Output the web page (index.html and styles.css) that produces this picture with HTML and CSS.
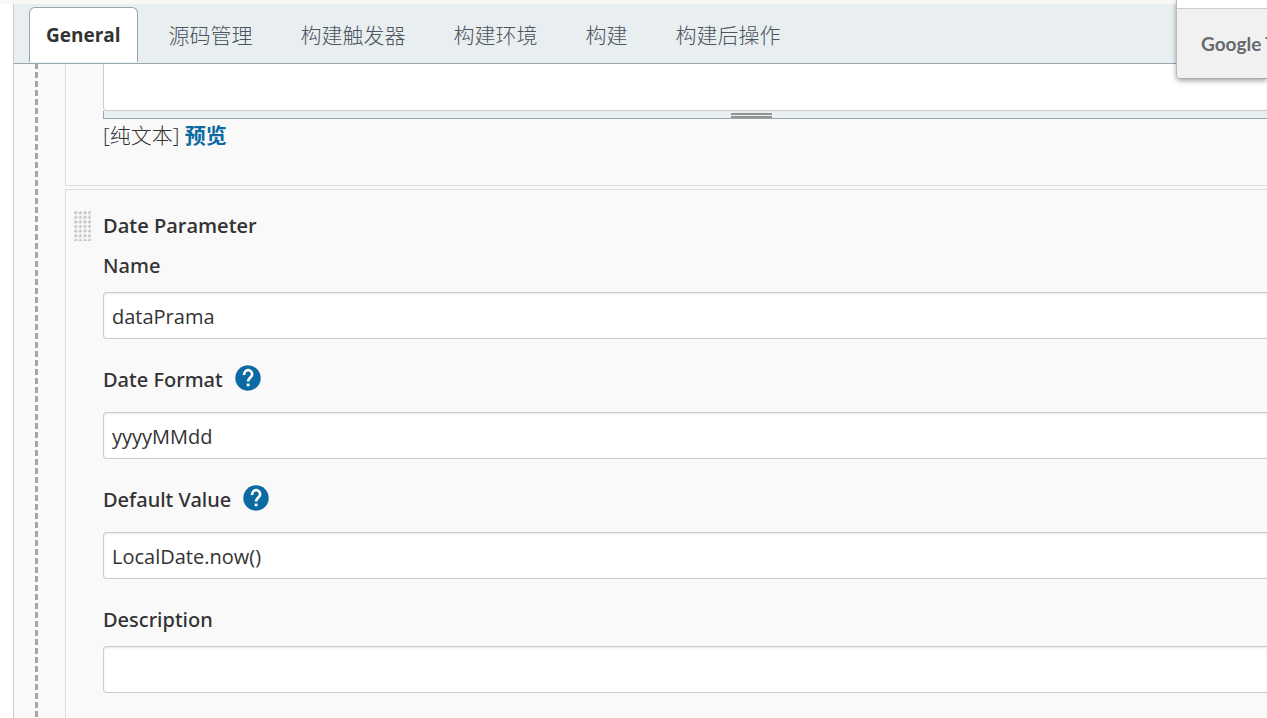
FILE: index.html
```html
<!DOCTYPE html>
<html lang="zh-CN">
<head>
<meta charset="utf-8">
<title>General</title>
<meta name="viewport" content="width=device-width, initial-scale=1">
<link rel="stylesheet" href="styles.css">
</head>
<body>
<div class="page">
  <div class="top-strip"></div>
  <main class="config">
    <nav class="tabs">
      <a class="tab tab-active" href="#general">General</a>
      <a class="tab" href="#scm">源码管理</a>
      <a class="tab" href="#triggers">构建触发器</a>
      <a class="tab" href="#environment">构建环境</a>
      <a class="tab" href="#build">构建</a>
      <a class="tab" href="#post-build">构建后操作</a>
    </nav>
    <form class="form">
      <div class="params">
        <section class="param param-previous">
          <textarea class="field area-tail" aria-label="描述"></textarea>
          <div class="resizer"><span class="resizer-grip"></span></div>
          <p class="format">[纯文本] <a class="preview" href="#preview">预览</a></p>
        </section>
        <section class="param">
          <header class="param-head">
            <svg class="drag" width="18" height="31" viewBox="0 0 18 31" aria-hidden="true">
              <defs>
                <linearGradient id="dot" x1="0" y1="0" x2="1" y2="1">
                  <stop offset="0.1" stop-color="#f2f2f2"/>
                  <stop offset="0.8" stop-color="#b2b2b2"/>
                </linearGradient>
                <pattern id="grip" width="4.6" height="4.6" patternUnits="userSpaceOnUse">
                  <path d="M0 0H4.6V4.6H0z" fill="#fdfdfd"/>
                  <path d="M.8 .8H4V4H.8z" fill="url(#dot)"/>
                </pattern>
              </defs>
              <path d="M0 0H18V31H0z" fill="url(#grip)"/>
            </svg>
            <h2 class="param-title">Date Parameter</h2>
          </header>
          <div class="entry">
            <div class="label-row"><label class="label" for="name">Name</label></div>
            <input class="field" id="name" type="text" value="dataPrama">
          </div>
          <div class="entry entry-help">
            <div class="label-row">
              <label class="label" for="format">Date Format</label>
              <button class="help" type="button" aria-label="Help: Date Format">
                <svg width="26" height="26" viewBox="0 0 26 26"><circle cx="13" cy="13" r="12.7" fill="#0b6aa2"/><path d="M9.1 9.9C9.1 7.3 10.8 5.2 13.1 5.2S17.1 7.1 17.1 9.5C17.1 12.5 13.1 12.6 13.1 16.6" fill="none" stroke="#fff" stroke-width="2.7"/><path d="M11.7 18.6H14.5V21.3H11.7z" fill="#fff"/></svg>
              </button>
            </div>
            <input class="field" id="format" type="text" value="yyyyMMdd">
          </div>
          <div class="entry entry-help">
            <div class="label-row">
              <label class="label" for="default">Default Value</label>
              <button class="help" type="button" aria-label="Help: Default Value">
                <svg width="26" height="26" viewBox="0 0 26 26"><circle cx="13" cy="13" r="12.7" fill="#0b6aa2"/><path d="M9.1 9.9C9.1 7.3 10.8 5.2 13.1 5.2S17.1 7.1 17.1 9.5C17.1 12.5 13.1 12.6 13.1 16.6" fill="none" stroke="#fff" stroke-width="2.7"/><path d="M11.7 18.6H14.5V21.3H11.7z" fill="#fff"/></svg>
              </button>
            </div>
            <input class="field" id="default" type="text" value="LocalDate.now()">
          </div>
          <div class="entry">
            <div class="label-row"><label class="label" for="description">Description</label></div>
            <input class="field" id="description" type="text">
          </div>
        </section>
      </div>
    </form>
  </main>
  <aside class="translate"><div class="translate-foot">Google&nbsp;Translate</div></aside>
</div>
</body>
</html>
```
FILE: styles.css
```css
* {
  box-sizing: border-box;
}

body {
  margin: 0;
  background: #fff;
  color: #333;
  font-family: "Open Sans", "Noto Sans CJK SC", sans-serif;
  font-size: 20px;
  line-height: 28px;
}

.page {
  position: relative;
  display: flex;
  flex-direction: column;
  height: 100vh;
  overflow: hidden;
}

.top-strip {
  flex: none;
  height: 4px;
  background: #f8f8f6;
}

.config {
  flex: 1 0 auto;
  display: flex;
  flex-direction: column;
  margin-left: 13px;
  border-left: 1px solid #ccc;
  background: #f9f9f9;
}

.tabs {
  display: flex;
  gap: 14px;
  padding: 3px 15px 1px;
  border-bottom: 1px solid #98a6ae;
  background: #e9eef1;
}

.tab {
  padding: 13px 16px;
  border: 1px solid transparent;
  border-bottom: 0;
  border-radius: 6px 6px 0 0;
  color: #4d545d;
  font-size: 21px;
  font-weight: 300;
  text-decoration: none;
  white-space: nowrap;
}

.tab-active {
  border-color: #98a6ae;
  background: #fff;
  color: #333;
  font-size: 19px;
  font-weight: 700;
}

.form {
  flex: 1;
  display: flex;
  padding-left: 21px;
}

.form::before {
  content: "";
  width: 3px;
  background: repeating-linear-gradient(#a6a6a6 0 6px, transparent 6px 9px) 0 -1px;
}

.params {
  flex: 1;
  display: flex;
  flex-direction: column;
  gap: 3px;
  padding-left: 27px;
}

.param {
  padding: 20px 0 24px 37px;
  border: 1px solid #ddd;
  border-right: 0;
}

.param-previous {
  padding: 0 0 36px 37px;
  border-top: 0;
}

.field {
  display: block;
  width: 100%;
  height: 47px;
  margin: 0;
  padding: 2px 8px 0;
  border: 1px solid #ccc;
  border-right: 0;
  border-radius: 4px 0 0 4px;
  background: #fff;
  box-shadow: inset 0 1px 2px rgba(0, 0, 0, .1);
  color: #333;
  font: inherit;
  outline: 0;
}

.area-tail {
  border-top: 0;
  border-radius: 0 0 0 4px;
  box-shadow: none;
  resize: none;
}

.resizer {
  display: flex;
  justify-content: center;
  height: 8px;
  padding: 2px 0 0 131px;
  border: solid #98a6ae;
  border-width: 0 0 1px 1px;
  background: #e9eef1;
}

.resizer-grip {
  width: 41px;
  height: 5px;
  border: solid #929592;
  border-width: 2px 0;
}

.format {
  margin: 2px 0 0;
  font-size: 21px;
  font-weight: 300;
}

.preview {
  color: #0b6aa2;
  font-weight: 700;
  text-decoration: none;
}

.param-head {
  display: flex;
  align-items: flex-end;
  gap: 12px;
  margin-left: -30px;
}

.param-title {
  margin: 0;
  padding-bottom: 1px;
  font-size: 20px;
  font-weight: 600;
}

.entry {
  margin-bottom: 16px;
}

.label-row {
  display: flex;
  align-items: flex-start;
  gap: 12px;
  padding: 10px 0 12px;
}

.entry-help .label-row {
  padding: 10px 0 18px;
}

.label {
  padding-top: 1px;
  font-family: "Noto Sans", sans-serif;
  font-weight: 500;
}

.help {
  display: flex;
  padding: 0;
  border: 0;
  background: none;
}

.translate {
  position: absolute;
  top: 0;
  right: 0;
  width: 91px;
  height: 79px;
  padding-top: 8px;
  overflow: hidden;
  border-left: 1px solid #bbb;
  border-bottom: 1px solid #aaa;
  border-radius: 0 0 0 5px;
  background: #fff;
  box-shadow: 0 2px 5px rgba(0, 0, 0, .35);
}

.translate-foot {
  height: 100%;
  padding: 21px 24px;
  border-top: 1px solid #ccc;
  background: #f1f1f1;
  color: #666a6f;
  font-family: Lato, sans-serif;
  font-size: 19px;
  font-weight: 700;
}
```
